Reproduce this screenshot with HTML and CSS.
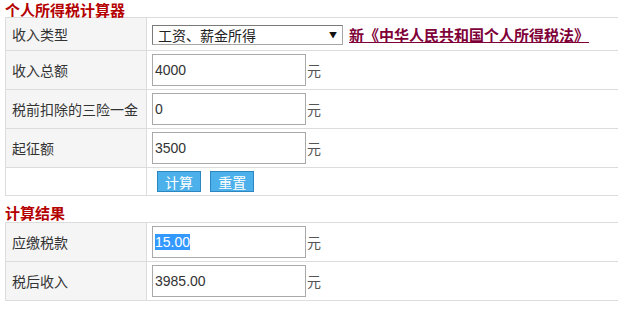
FILE: index.html
```
<!DOCTYPE html>
<html lang="zh-CN">
<head>
    <meta charset="UTF-8">
    <title>个人所得税计算器</title>
    <link rel="stylesheet" href="styles.css">
</head>
<body>
    <div class="wrap">
        <h2 class="title">个人所得税计算器</h2>
        <table class="calc">
            <tr class="row-first">
                <td class="label">收入类型</td>
                <td class="value">
                    <div class="select-box">
                        <select class="select">
                            <option>工资、薪金所得</option>
                        </select>
                        <span class="arrow">▼</span>
                    </div><a class="law" href="#">新《中华人民共和国个人所得税法》</a>
                </td>
            </tr>
            <tr>
                <td class="label">收入总额</td>
                <td class="value"><input class="field" type="text" value="4000"><span class="unit">元</span></td>
            </tr>
            <tr>
                <td class="label">税前扣除的三险一金</td>
                <td class="value"><input class="field" type="text" value="0"><span class="unit">元</span></td>
            </tr>
            <tr>
                <td class="label">起征额</td>
                <td class="value"><input class="field" type="text" value="3500"><span class="unit">元</span></td>
            </tr>
            <tr class="row-btns">
                <td class="blank"></td>
                <td class="btns">
                    <button class="btn">计算</button>
                    <button class="btn">重置</button>
                </td>
            </tr>
        </table>

        <h2 class="title title-result">计算结果</h2>
        <table class="calc">
            <tr>
                <td class="label">应缴税款</td>
                <td class="value"><div class="field out"><span class="sel">15.00</span></div><span class="unit">元</span></td>
            </tr>
            <tr>
                <td class="label">税后收入</td>
                <td class="value"><div class="field out">3985.00</div><span class="unit">元</span></td>
            </tr>
        </table>
    </div>
</body>
</html>
```

FILE: styles.css
```
* {
    margin: 0;
    padding: 0;
    box-sizing: border-box;
}

html, body {
    overflow: hidden;
}

body {
    font-family: "Noto Sans CJK SC", "Liberation Sans", sans-serif;
    font-size: 14px;
    color: #333;
    background: #fff;
}

.wrap {
    padding-left: 5px;
    padding-top: 2px;
}

.title {
    font-size: 15px;
    line-height: 15px;
    font-weight: bold;
    color: #b40000;
}

.title-result {
    margin-top: 7px;
    line-height: 19px;
    margin-bottom: 0;
}

.calc {
    width: 630px;
    border-collapse: collapse;
}

.calc td {
    border: 1px solid #dcdcdc;
    height: 39px;
    vertical-align: middle;
}

.calc .row-first td {
    height: 33px;
}

.calc .row-btns td {
    height: 28px;
}

.label {
    width: 141px;
    background: #f5f5f5;
    padding-left: 6px;
    white-space: nowrap;
}

.value {
    padding-left: 5px;
    white-space: nowrap;
}

.value > * {
    vertical-align: middle;
}

.select-box {
    position: relative;
    display: inline-block;
    width: 191px;
    height: 20px;
}

.select {
    appearance: none;
    -webkit-appearance: none;
    width: 100%;
    height: 20px;
    border: 1px solid #a6a6a6;
    border-top-color: #7a7a7a;
    border-left-color: #7a7a7a;
    background: #fff;
    font-family: "Noto Sans CJK SC", sans-serif;
    font-size: 14px;
    line-height: 18px;
    color: #222;
    padding-left: 5px;
    border-radius: 0;
}

.arrow {
    position: absolute;
    right: 6px;
    top: 5px;
    font-size: 8px;
    line-height: 9px;
    color: #111;
}

.law {
    display: inline-block;
    margin-left: 6px;
    font-size: 15px;
    font-weight: bold;
    color: #7f0038;
    text-decoration: underline;
}

.field {
    display: inline-block;
    width: 154px;
    height: 32px;
    border: 1px solid #a9a9a9;
    background: #fff;
    font-family: "Liberation Sans", Arial, sans-serif;
    font-size: 14px;
    color: #333;
    padding-left: 2px;
    outline: none;
    line-height: 30px;
}

.out {
    vertical-align: middle;
}

.sel {
    background: #3399ff;
    color: #fff;
}

.unit {
    color: #555;
    margin-left: 1px;
}

.blank {
    background: #fff;
}

.btns {
    padding-left: 10px;
}

.btn {
    width: 44px;
    height: 21px;
    background: #4cb1ea;
    border: 1px solid #2d86bf;
    color: #fff;
    font-family: "Noto Sans CJK SC", sans-serif;
    font-size: 14px;
    line-height: 18px;
    margin-right: 6px;
    cursor: pointer;
}
```
